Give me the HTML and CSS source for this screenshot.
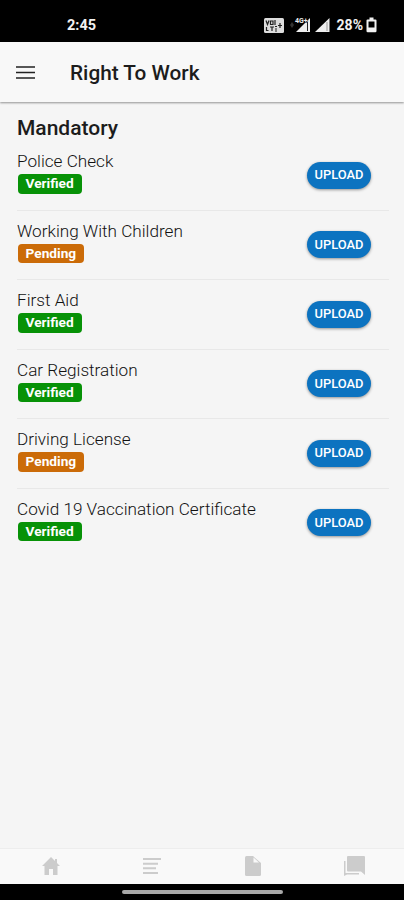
FILE: index.html
```html
<!DOCTYPE html>
<html lang="en">
<head>
  <meta charset="UTF-8" />
  <meta name="viewport" content="width=device-width, initial-scale=1.0"/>
  <title>Right To Work</title>
  <link rel="stylesheet" href="styles.css">
</head>
<body>

<div class="phone">

  <!-- STATUS BAR -->
  <div class="status-bar">
    <span class="time">2:45</span>
    <div class="status-icons">
      <svg class="volte" width="20" height="15" viewBox="0 0 20 15">
        <rect width="20" height="15" rx="1.5" fill="#ddd"/>
        <path d="M2 2.500l1.500 4L5 2.500M6.500 3h2.500v3.500h-2.500zM11 2v5M2.500 9v3.500h2M6 9h4M8 9v4M11 8.500h2M11 11h2M11 13h2M14 7.500h4M16 5v5" fill="none" stroke="#222" stroke-width="1.200"/>
      </svg>
      <svg class="signal-one" width="21" height="16" viewBox="0 0 21 16">
        <path d="M2 5l2 3-2 3-2-3z" fill="#333"/>
        <path d="M20 1v14H6z" fill="#eee"/>
        <path d="M17.500 5v9" stroke="#222" stroke-width="1"/>
        <text x="5" y="6" class="network">4G+</text>
      </svg>
      <svg class="signal-two" width="16" height="16" viewBox="0 0 16 16">
        <path d="M15.500 1v14H1z" fill="#eee"/>
        <path d="M13 5v9" stroke="#999" stroke-width="1"/>
      </svg>
      <span class="percent">28%</span>
      <svg width="11" height="16" viewBox="0 0 11 16">
        <path d="M3.500 0.500h4v2h2a1 1 0 0 1 1 1V14a1.200 1.200 0 0 1-1.200 1.200H1.700A1.200 1.200 0 0 1 .5 14V3.500a1 1 0 0 1 1-1h2z" fill="#f2f2f2"/>
        <rect x="2.500" y="4.500" width="6" height="6" fill="#000"/>
      </svg>
    </div>
  </div>

  <!-- HEADER -->
  <header class="toolbar">
    <svg class="menu-icon" width="20" height="14" viewBox="0 0 20 14">
      <path d="M0 1h19M0 6.500h19M0 12h19" stroke="#222" stroke-width="1.700"/>
    </svg>
    <h1>Right To Work</h1>
  </header>

  <!-- DOCUMENT LIST -->
  <main class="content">
    <h2>Mandatory</h2>
    <ul class="list">
      <li class="item">
        <div class="info">
          <span class="name">Police Check</span>
          <span class="badge verified">Verified</span>
        </div>
        <button class="btn">UPLOAD</button>
      </li>
      <li class="item">
        <div class="info">
          <span class="name">Working With Children</span>
          <span class="badge pending">Pending</span>
        </div>
        <button class="btn">UPLOAD</button>
      </li>
      <li class="item">
        <div class="info">
          <span class="name">First Aid</span>
          <span class="badge verified">Verified</span>
        </div>
        <button class="btn">UPLOAD</button>
      </li>
      <li class="item">
        <div class="info">
          <span class="name">Car Registration</span>
          <span class="badge verified">Verified</span>
        </div>
        <button class="btn">UPLOAD</button>
      </li>
      <li class="item">
        <div class="info">
          <span class="name">Driving License</span>
          <span class="badge pending">Pending</span>
        </div>
        <button class="btn">UPLOAD</button>
      </li>
      <li class="item">
        <div class="info">
          <span class="name">Covid 19 Vaccination Certificate</span>
          <span class="badge verified">Verified</span>
        </div>
        <button class="btn">UPLOAD</button>
      </li>
    </ul>
  </main>

  <!-- TABS -->
  <nav class="tabs">
    <a class="tab">
      <svg width="20" height="20" viewBox="0 0 20 20"><path d="M10 1L1 10h2.500v9H8v-6h4v6h4.500v-9H19l-3-3V3h-2v2z"/></svg>
    </a>
    <a class="tab">
      <svg width="20" height="20" viewBox="0 0 20 20"><path d="M1 2h18v2H1zM1 6.700h15v2H1zM1 11.300h13v2H1zM1 16h15v2H1z"/></svg>
    </a>
    <a class="tab">
      <svg width="20" height="20" viewBox="0 0 20 20"><path d="M3.500 0H10l8 7v11.500a1.500 1.500 0 0 1-1.500 1.500h-13A1.500 1.500 0 0 1 2 18.500v-17A1.500 1.500 0 0 1 3.500 0z"/><path class="fold" d="M10.500 1.500v5h5.500z"/></svg>
    </a>
    <a class="tab">
      <svg width="22" height="20" viewBox="0 0 22 20"><path d="M5 0h16a1 1 0 0 1 1 1v18l-4-3.500H5a1 1 0 0 1-1-1V1a1 1 0 0 1 1-1zM1 5h1.500v12H16v1.500H4L1 20z"/></svg>
    </a>
  </nav>

  <div class="gesture-bar"><span class="pill"></span></div>
</div>

</body>
</html>
```
FILE: styles.css
```css
:root {
  --primary-color: #0c73c0;
  --verified: #079207;
  --pending: #cb6b08;
  --page: #f5f5f5;
}

* {
  box-sizing: border-box;
  margin: 0;
  padding: 0;
}

body {
  font-family: Roboto, sans-serif;
  background: #000;
}

.phone {
  height: 900px;
  display: flex;
  flex-direction: column;
  background: var(--page);
}

.status-bar {
  height: 42px;
  padding: 8px 27px 0 67px;
  display: flex;
  align-items: center;
  justify-content: space-between;
  background: #000;
  color: #f2f2f2;
  font-size: 14px;
  font-weight: 700;
}

.time {
  font-size: 14.500px;
}

.status-icons {
  display: flex;
  align-items: center;
}

.signal-one {
  margin-left: 6px;
}

.signal-two {
  margin-left: 3px;
}

.network {
  font-size: 7px;
  font-weight: 700;
  fill: #eee;
  stroke: #000;
  stroke-width: 1px;
  paint-order: stroke;
}

.percent {
  margin: 0 3px 0 7px;
}

.toolbar {
  height: 60px;
  padding: 1px 16px 0;
  display: flex;
  align-items: center;
  background: #f8f8f8;
  box-shadow: 0 1px 2px rgba(0, 0, 0, 0.4);
  z-index: 1;
}

.menu-icon {
  margin-right: 34px;
}

h1 {
  font-size: 20.800px;
  line-height: 24px;
  font-weight: 500;
  color: #1c1c1c;
}

.content {
  flex: 1;
  padding: 14px 15px 0 17px;
}

h2 {
  font-size: 21px;
  line-height: 24px;
  font-weight: 500;
  color: #1c1c1c;
}

.list {
  padding-top: 1px;
  list-style: none;
}

.item {
  height: 69.600px;
  padding: 10px 18px 0 0;
  display: flex;
  align-items: flex-start;
  justify-content: space-between;
  border-bottom: 1px solid #e8e8e8;
}

.item:last-child {
  border-bottom: none;
}

.info {
  display: flex;
  flex-direction: column;
  align-items: flex-start;
  gap: 3px;
}

.name {
  font-size: 17.150px;
  line-height: 20px;
  font-weight: 300;
  color: #111;
}

.badge {
  height: 19.500px;
  padding: 0 8px;
  margin-left: 0.500px;
  border-radius: 4px;
  font-size: 13.700px;
  line-height: 19px;
  font-weight: 700;
  color: #fff;
}

.verified {
  background: var(--verified);
}

.pending {
  background: var(--pending);
}

.btn {
  width: 64px;
  height: 27px;
  margin-top: 10.500px;
  padding-bottom: 1px;
  border: none;
  border-radius: 14px;
  background: var(--primary-color);
  box-shadow: 0 1px 3px rgba(0, 0, 0, 0.4);
  color: #fff;
  font-family: inherit;
  font-size: 12.900px;
  font-weight: 500;
}

.tabs {
  height: 36px;
  display: flex;
  background: #f9f9f9;
  border-top: 1px solid #ededed;
}

.tab {
  flex: 1;
  padding-bottom: 1px;
  display: flex;
  align-items: center;
  justify-content: center;
}

.tab svg {
  fill: #ccc;
}

.tab .fold {
  fill: #f9f9f9;
}

.gesture-bar {
  height: 16px;
  display: flex;
  align-items: center;
  justify-content: center;
  background: #000;
}

.pill {
  width: 161px;
  height: 4px;
  border-radius: 2px;
  background: #a8a8a8;
}
```
